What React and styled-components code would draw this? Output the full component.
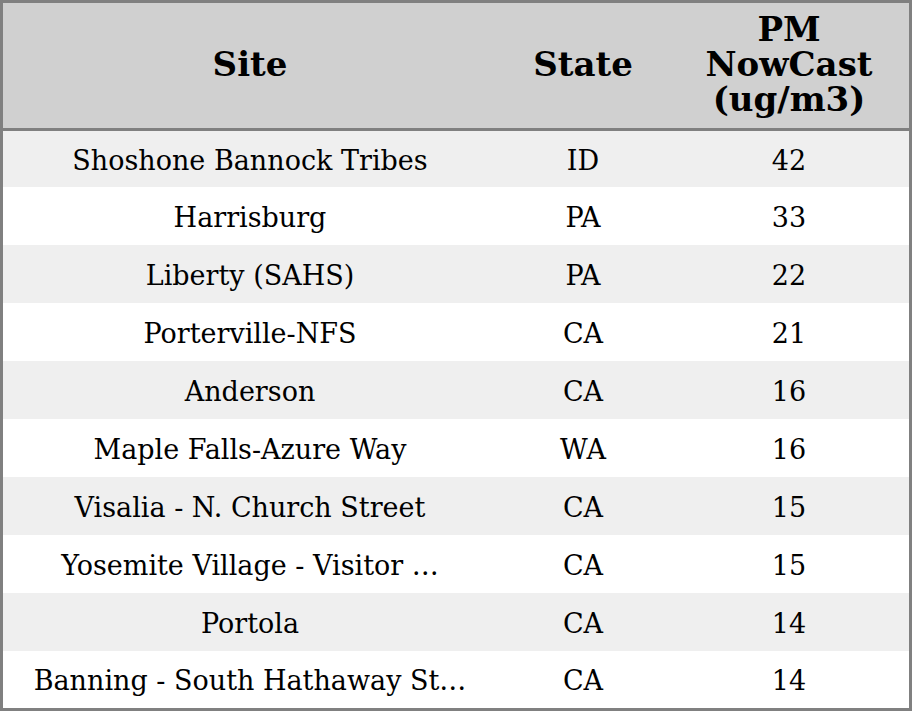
import styled, { createGlobalStyle } from "styled-components"

const GlobalStyle = createGlobalStyle`
    html, body {
        margin: 0;
        padding: 0;
        background: #ffffff;
    }
`;

const rows = [
    { site: "Shoshone Bannock Tribes", state: "ID", value: 42 },
    { site: "Harrisburg", state: "PA", value: 33 },
    { site: "Liberty (SAHS)", state: "PA", value: 22 },
    { site: "Porterville-NFS", state: "CA", value: 21 },
    { site: "Anderson", state: "CA", value: 16 },
    { site: "Maple Falls-Azure Way", state: "WA", value: 16 },
    { site: "Visalia - N. Church Street", state: "CA", value: 15 },
    { site: "Yosemite Village - Visitor …", state: "CA", value: 15 },
    { site: "Portola", state: "CA", value: 14 },
    { site: "Banning - South Hathaway St…", state: "CA", value: 14 },
];

// row heights between the header line and the bottom border
const rowHeight = (i) => i === 0 ? 56 : i === rows.length - 1 ? 57 : 58;

const App = () => {
    return <>
        <GlobalStyle />
        <Table>
            <colgroup>
                <SiteCol />
                <StateCol />
                <ValueCol />
            </colgroup>
            <thead>
                <HeadRow>
                    <HeadCell>Site</HeadCell>
                    <HeadCell>State</HeadCell>
                    <HeadCell>PM<br />NowCast<br />(ug/m3)</HeadCell>
                </HeadRow>
            </thead>
            <tbody>
                {rows.map((r, i) => (
                    <Row key={i} $odd={i % 2 === 0} $h={rowHeight(i)}>
                        <Cell>{r.site}</Cell>
                        <Cell>{r.state}</Cell>
                        <Cell>{r.value}</Cell>
                    </Row>
                ))}
            </tbody>
        </Table>
    </>
};

const Table = styled.table`
    width: 912px;
    height: 711px;
    box-sizing: border-box;
    border-collapse: separate;
    border-spacing: 0;
    border: 3px solid #808080;
    table-layout: fixed;
    font-family: "DejaVu Serif", serif;
    color: #000000;
`;

const SiteCol = styled.col`
    width: 494px;
`;

const StateCol = styled.col`
    width: 172px;
`;

const ValueCol = styled.col`
    width: 240px;
`;

const HeadRow = styled.tr`
    background: #d0d0d0;
    height: 128px;
`;

const HeadCell = styled.th`
    box-sizing: border-box;
    border-bottom: 3px solid #808080;
    font-size: 34px;
    font-weight: 700;
    line-height: 35px;
    text-align: center;
    vertical-align: middle;
    padding: 0 0 3px 0;
`;

const Row = styled.tr`
    background: ${p => p.$odd ? "#efefef" : "#ffffff"};
    height: ${p => p.$h}px;
`;

const Cell = styled.td`
    font-size: 27px;
    text-align: center;
    vertical-align: middle;
    padding: 2px 0 0 0;
    white-space: nowrap;
`;

export default App;
